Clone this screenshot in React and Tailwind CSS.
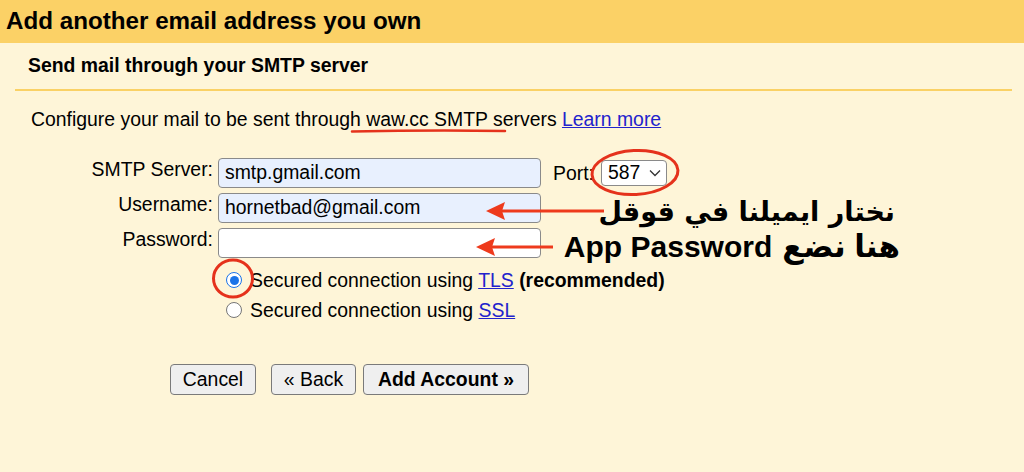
import React from "react";

const font = "font-['Liberation_Sans','Arial',sans-serif]";

function Label({ children }) {
  return <div className="w-[198px] shrink-0 text-right leading-[22px]">{children}</div>;
}

function Field({ value, filled }) {
  return (
    <div
      className={`w-[323px] h-[30px] border border-[#8a8a8a] rounded-[4px] flex items-center pl-[6px] ${
        filled ? "bg-[#e8f0fe]" : "bg-white"
      }`}
    >
      {value}
    </div>
  );
}

function Radio({ checked }) {
  if (checked) {
    return (
      <span className="w-[16px] h-[16px] rounded-full border-[1.5px] border-[#1a73e8] bg-white flex items-center justify-center shrink-0">
        <span className="w-[9px] h-[9px] rounded-full bg-[#1a73e8]" />
      </span>
    );
  }
  return <span className="w-[16px] h-[16px] rounded-full border border-[#767676] bg-white shrink-0" />;
}

function Btn({ children, w, bold }) {
  return (
    <button
      className={`${w} h-[31px] border border-[#7a7a7a] rounded-[4px] bg-[#efefef] text-[19.4px] text-black flex items-center justify-center ${
        bold ? "font-bold" : ""
      }`}
    >
      {children}
    </button>
  );
}

function Marks() {
  return (
    <svg className="absolute inset-0 pointer-events-none" width="1024" height="472" viewBox="0 0 1024 472">
      {/* underline under the server name */}
      <path d="M352 131.5 Q430 130 505 131" stroke="#e5321c" strokeWidth="2.5" fill="none" strokeLinecap="round" />
      {/* ellipse round the port */}
      <ellipse cx="635" cy="172.5" rx="43" ry="22" stroke="#e5321c" strokeWidth="3" fill="none" transform="rotate(-3 635 172.5)" />
      {/* circle round the TLS radio */}
      <ellipse cx="233" cy="278.5" rx="19.5" ry="18.5" stroke="#e5321c" strokeWidth="3" fill="none" />
      {/* arrows */}
      <line x1="604" y1="211" x2="500" y2="211" stroke="#ee3a1c" strokeWidth="3" />
      <path d="M486 211 L505 202 L502 211 L505 220 Z" fill="#ee3a1c" />
      <line x1="553" y1="247" x2="490" y2="247" stroke="#ee3a1c" strokeWidth="3" />
      <path d="M476 247 L495 238 L492 247 L495 256 Z" fill="#ee3a1c" />
    </svg>
  );
}

export default function App() {
  return (
    <div className={`relative w-[1024px] h-[472px] overflow-hidden bg-[#fef5d8] text-black ${font}`}>
      <div className="h-[43px] bg-[#fbd166] flex items-center pl-[6px] text-[24.2px] font-bold">
        Add another email address you own
      </div>

      <div className="pl-[15px] pr-[12px]">
        <div className="h-[46px] flex items-center pl-[13px] text-[19.4px] font-bold">
          Send mail through your SMTP server
        </div>
        <div className="h-[2px] bg-[#fad165]" />

        <div className="mt-[17px] pl-[16px] text-[19.4px] leading-[22px]">
          Configure your mail to be sent through waw.cc SMTP servers{" "}
          <a className="text-[#2222cc] underline">Learn more</a>
        </div>

        <div className="mt-[28px] flex flex-col gap-[5px] text-[19.4px]">
          <div className="flex items-start gap-[5px]">
            <Label>SMTP Server:</Label>
            <Field value="smtp.gmail.com" filled />
            <div className="ml-[7px] leading-[22px] mt-[4px]">Port:</div>
            <div className="ml-[2px] mt-[2px] h-[26px] w-[66px] border border-[#8a8a8a] rounded-[4px] bg-white flex items-center justify-between pl-[6px] pr-[5px]">
              <span>587</span>
              <svg width="12" height="8" viewBox="0 0 12 8">
                <path d="M1 1.5 L6 6.5 L11 1.5" stroke="#333" strokeWidth="1.3" fill="none" />
              </svg>
            </div>
          </div>
          <div className="flex items-start gap-[5px]">
            <Label>Username:</Label>
            <Field value="hornetbad@gmail.com" filled />
          </div>
          <div className="flex items-start gap-[5px]">
            <Label>Password:</Label>
            <Field value="" />
          </div>
        </div>

        <div className="mt-[11px] pl-[211px] flex flex-col gap-[8px] text-[19.4px] leading-[22px]">
          <label className="flex items-center gap-[8px]">
            <Radio checked />
            <span>
              Secured connection using <a className="text-[#2222cc] underline">TLS</a>{" "}
              <b>(recommended)</b>
            </span>
          </label>
          <label className="flex items-center gap-[8px]">
            <Radio />
            <span>
              Secured connection using <a className="text-[#2222cc] underline">SSL</a>
            </span>
          </label>
        </div>

        <div className="mt-[43px] pl-[155px] flex items-center">
          <Btn w="w-[86px]">Cancel</Btn>
          <div className="ml-[15px]">
            <Btn w="w-[85px]">« Back</Btn>
          </div>
          <div className="ml-[7px]">
            <Btn w="w-[166px]" bold>
              Add Account »
            </Btn>
          </div>
        </div>
      </div>

      <Marks />

      <div
        dir="rtl"
        className="absolute right-[129px] top-[194px] text-[27px] font-bold leading-[36px] font-['DejaVu_Sans',sans-serif]"
      >
        نختار ايميلنا في قوقل
      </div>
      <div
        dir="rtl"
        className="absolute right-[124px] top-[229px] flex items-center gap-[10px] text-[30px] font-bold leading-[36px] font-['Liberation_Sans','DejaVu_Sans',sans-serif]"
      >
        <span className="text-[31px]">هنا نضع</span>
        <span dir="ltr">App Password</span>
      </div>
    </div>
  );
}
